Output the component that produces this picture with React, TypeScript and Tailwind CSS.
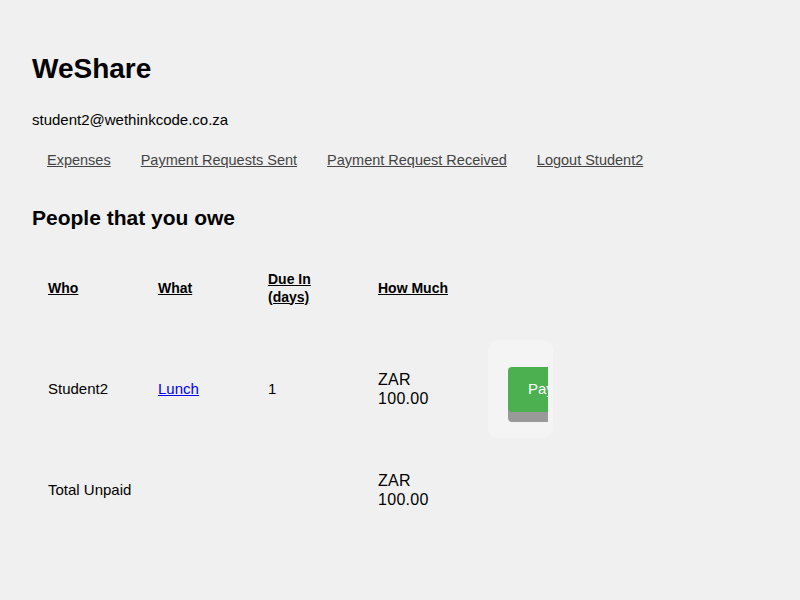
import React from "react";

const font = { fontFamily: '"Liberation Sans", Arial, sans-serif' };

export default function App() {
  const cell = "w-[110px] px-[15px] flex items-center whitespace-nowrap";
  return (
    <div className="min-h-[600px] w-full bg-[#f0f0f0] text-black pl-[32px] pt-[53px]" style={font}>
      <h1 className="text-[28px] leading-[32px] font-bold">WeShare</h1>
      <div className="mt-[26px] text-[15px] leading-[18px]">student2@wethinkcode.co.za</div>
      <nav className="mt-[22px] flex text-[14.5px] leading-[18px] text-[#444]">
        <a className="mx-[15px] underline" href="#">Expenses</a>
        <a className="mx-[15px] underline" href="#">Payment Requests Sent</a>
        <a className="mx-[15px] underline" href="#">Payment Request Received</a>
        <a className="mx-[15px] underline" href="#">Logout Student2</a>
      </nav>
      <h2 className="mt-[35px] text-[21px] leading-[28px] font-bold">People that you owe</h2>
      <div className="mt-[5px] ml-[1px] flex flex-col">
        <div className="flex h-[101px] text-[14px] leading-[18px] font-bold">
          <div className={cell}><span className="underline">Who</span></div>
          <div className={cell}><span className="underline">What</span></div>
          <div className="w-[110px] px-[15px] flex items-center"><span className="underline">Due In<br />(days)</span></div>
          <div className={cell}><span className="underline">How Much</span></div>
        </div>
        <div className="flex h-[101px] text-[15px] leading-[18px]">
          <div className={cell}>Student2</div>
          <div className={cell}><a href="#" className="underline text-[#0000ee]">Lunch</a></div>
          <div className={cell}>1</div>
          <div className={cell}>
            <div className="text-[16px] leading-[19px] tracking-[0.3px]">ZAR<br />100.00</div>
          </div>
          <div className="pl-[15px] flex items-center">
            <div className="w-[65px] h-[98px] rounded-[10px] bg-[#f4f4f4] pl-[20px] pr-[5px] pt-[27px] flex items-start">
              <div className="w-[40px] h-[56px] overflow-hidden flex items-start">
                <div className="h-[45px] w-[80px] bg-[#4caf50] rounded-[4px] shadow-[0_10px_0_#999] text-white text-[15px] pl-[20px] flex items-center shrink-0">
                  Pay
                </div>
              </div>
            </div>
          </div>
        </div>
        <div className="flex h-[101px] text-[15px] leading-[18px]">
          <div className={cell}>Total Unpaid</div>
          <div className={cell}></div>
          <div className={cell}></div>
          <div className={cell}>
            <div className="text-[16px] leading-[19px] tracking-[0.3px]">ZAR<br />100.00</div>
          </div>
        </div>
      </div>
    </div>
  );
}
